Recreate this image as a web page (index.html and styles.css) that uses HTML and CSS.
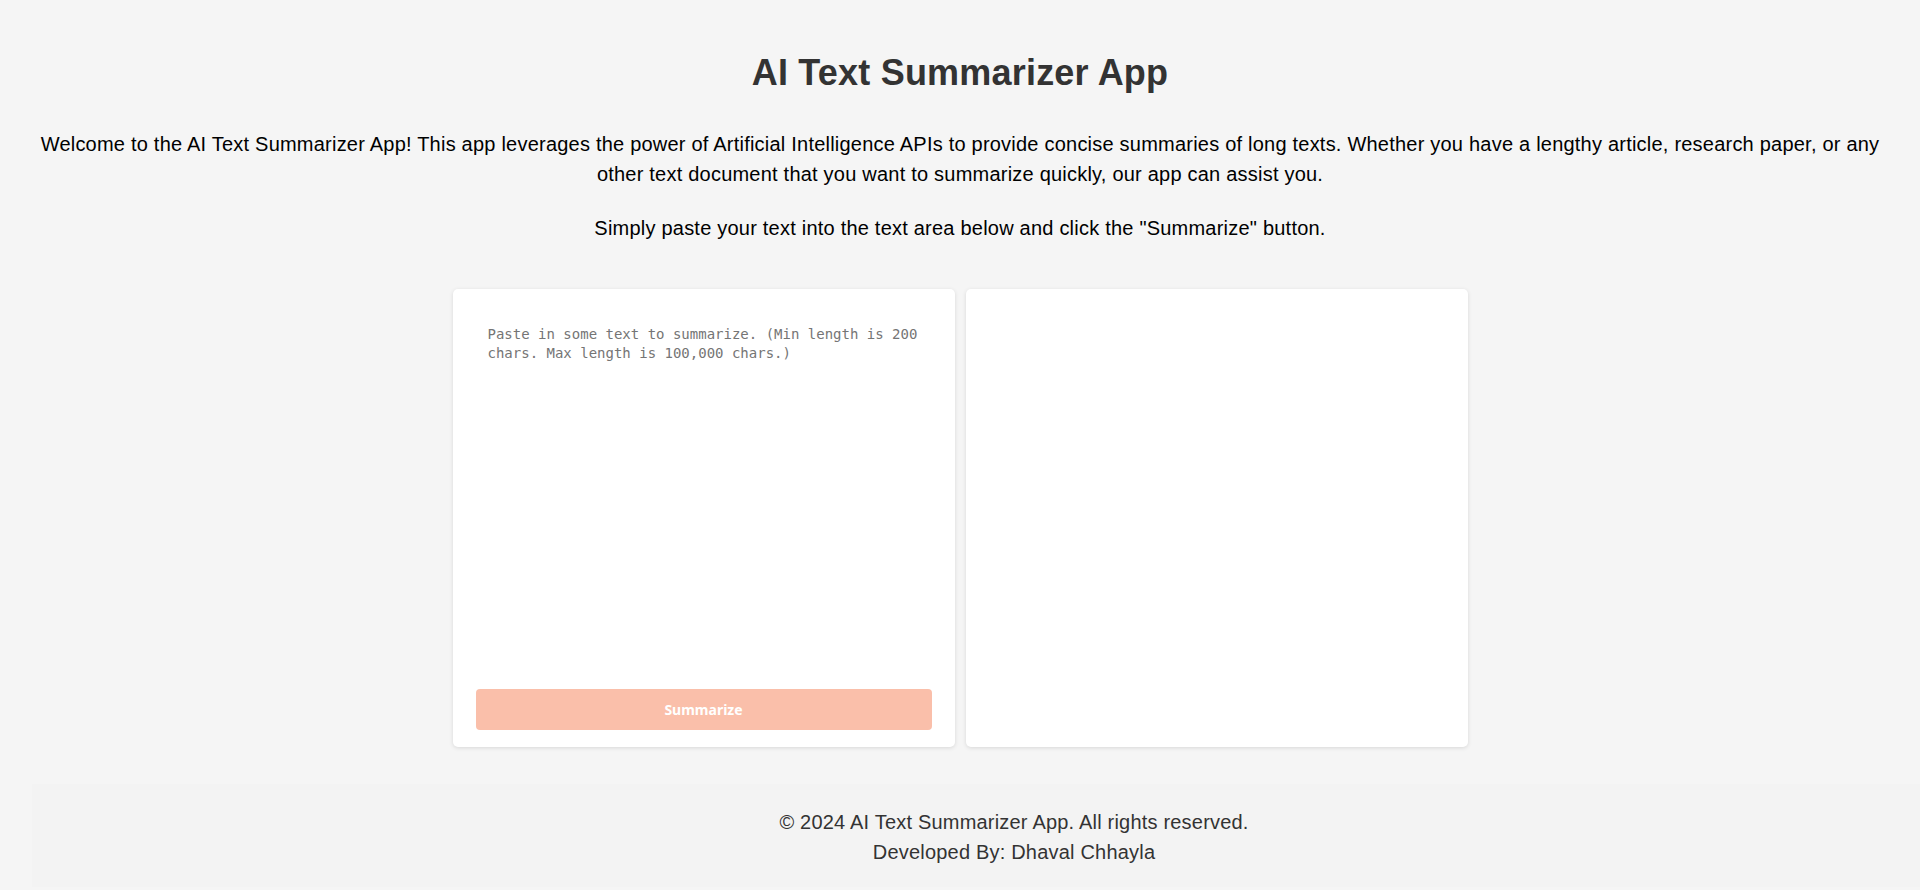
FILE: index.html
```html
<!DOCTYPE html>
<html>
<head>
    <title>AI Text Summarizer App</title>
    <link rel="stylesheet" href="styles.css">
</head>
<body>
    <div class="page">
        <h1>AI Text Summarizer App</h1>
        <p class="intro">Welcome to the AI Text Summarizer App! This app leverages the power of Artificial Intelligence APIs to provide concise summaries of long texts. Whether you have a lengthy article, research paper, or any other text document that you want to summarize quickly, our app can assist you.</p>
        <p class="intro">Simply paste your text into the text area below and click the "Summarize" button.</p>

        <div class="cards">
            <div class="card">
                <textarea id="text-input" class="text-input" placeholder="Paste in some text to summarize. (Min length is 200 chars. Max length is 100,000 chars.)"></textarea>
                <button id="submit-button" class="submit-button" disabled>Summarize</button>
            </div>
            <div class="card">
                <div id="summary" class="summary"></div>
            </div>
        </div>

        <footer class="footer">
            <p>&copy; 2024 AI Text Summarizer App. All rights reserved.</p>
            <p>Developed By: Dhaval Chhayla</p>
        </footer>
    </div>
</body>
</html>
```

FILE: styles.css
```css
html, body {
    overflow-x: hidden;
}
body {
    font-family: "Liberation Sans", Arial, sans-serif;
    margin: 0;
    padding: 0;
    background-color: #f5f5f5;
    color: #000;
}
.page {
    padding: 52px 0 0 32px;
}
h1 {
    font-size: 36px;
    line-height: 41px;
    letter-spacing: 0.2px;
    color: #333;
    text-align: center;
    margin: 0 32px 36px 0;
}
.intro {
    font-size: 20px;
    line-height: 30px;
    letter-spacing: 0.22px;
    text-align: center;
    margin: 0 32px 24px 0;
}
.cards {
    display: flex;
    justify-content: center;
    gap: 11px;
    margin: 46px 32px 0 0;
}
.card {
    width: 502px;
    height: 458px;
    box-sizing: border-box;
    background-color: #fff;
    border-radius: 5px;
    box-shadow: 0 1px 4px rgba(0, 0, 0, 0.12);
    padding: 24px 23px 17px;
    display: flex;
    flex-direction: column;
}
.text-input {
    flex: 1;
    border: none;
    outline: none;
    resize: none;
    padding: 12px;
    margin: 0 0 16px;
    font-family: "DejaVu Sans Mono", "Liberation Mono", monospace;
    font-size: 14px;
    line-height: 19px;
    background-color: #fff;
}
.text-input::placeholder {
    color: #757575;
}
.submit-button {
    height: 41px;
    border: none;
    border-radius: 4px;
    background-color: #fabfaa;
    color: #fff;
    font-family: "Noto Sans", "Open Sans", sans-serif;
    font-size: 14px;
    font-weight: bold;
    cursor: pointer;
}
.footer {
    width: 1920px;
    padding: 23px 22px 20px;
    margin-top: 37px;
    background-color: #f3f3f3;
    color: #333;
    text-align: center;
    font-size: 20px;
    line-height: 30px;
    letter-spacing: 0.2px;
}
.footer p {
    margin: 0;
}
```
